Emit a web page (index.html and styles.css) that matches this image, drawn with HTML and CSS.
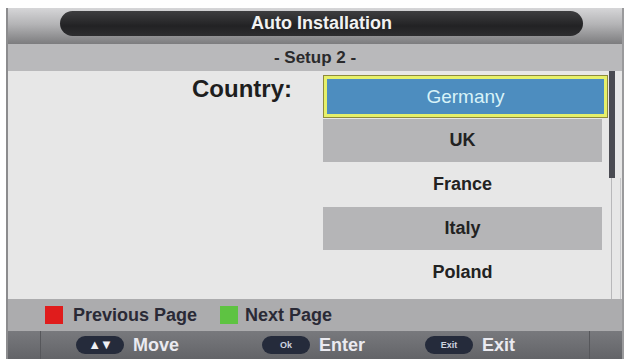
FILE: index.html
```html
<!DOCTYPE html>
<html lang="en">
<head>
    <meta charset="UTF-8">
    <title>Auto Installation</title>
    <link rel="stylesheet" href="styles.css">
</head>
<body>
    <div class="screen">
        <!-- Title -->
        <div class="titlebar">
            <div class="title-pill">Auto Installation</div>
        </div>
        <div class="subbar">- Setup 2 -</div>

        <!-- Country list -->
        <div class="content">
            <div class="label-col">
                <div class="label">Country:</div>
            </div>
            <div class="list">
                <div class="item selected">Germany</div>
                <div class="item shaded">UK</div>
                <div class="item">France</div>
                <div class="item shaded">Italy</div>
                <div class="item">Poland</div>
            </div>
            <div class="scrollbar">
                <div class="thumb"></div>
                <div class="track"></div>
            </div>
        </div>

        <!-- Colour keys -->
        <div class="legend">
            <span class="key red"></span>
            <span class="legend-text">Previous Page</span>
            <span class="key green"></span>
            <span class="legend-text">Next Page</span>
        </div>

        <!-- Remote buttons -->
        <div class="navbar">
            <div class="nav-inner">
                <div class="nav-item move">
                    <span class="btn">&#9650;&#9660;</span>
                    <span class="nav-label">Move</span>
                </div>
                <div class="nav-item enter">
                    <span class="btn small">Ok</span>
                    <span class="nav-label">Enter</span>
                </div>
                <div class="nav-item exit">
                    <span class="btn small">Exit</span>
                    <span class="nav-label">Exit</span>
                </div>
            </div>
        </div>
    </div>
</body>
</html>
```

FILE: styles.css
```css
body {
    margin: 0;
    background: #fff;
    font-family: "Liberation Sans", Arial, sans-serif;
}

.screen {
    width: 614px;
    margin: 8px 0 0 6px;
    border-left: 2px solid #8c8c8e;
    border-right: 2px solid #9a9a9c;
}

.titlebar {
    height: 36px;
    box-sizing: border-box;
    padding: 3px 39px 0 52px;
    background: linear-gradient(to bottom, #d6d6d8 0%, #b4b4b6 45%, #7c7c7e 100%);
}

.title-pill {
    height: 25px;
    line-height: 25px;
    border-radius: 13px;
    background: linear-gradient(to bottom, #3e3e40 0%, #222224 60%, #2e2e30 100%);
    color: #f2f2f2;
    font-weight: bold;
    font-size: 18px;
    text-align: center;
}

.subbar {
    height: 27px;
    line-height: 27px;
    background: #b9b9bb;
    color: #2a2a2c;
    font-weight: bold;
    font-size: 17px;
    text-align: center;
}

.content {
    display: flex;
    height: 228px;
    background: #e7e7e7;
}

.label-col {
    width: 315px;
}

.label {
    margin-top: 4px;
    padding-right: 31px;
    line-height: 28px;
    text-align: right;
    font-size: 24px;
    font-weight: bold;
    color: #1e1e1e;
}

.list {
    width: 285px;
    padding-top: 4px;
}

.item {
    width: 279px;
    height: 43px;
    margin-bottom: 1px;
    line-height: 43px;
    text-align: center;
    font-size: 18px;
    font-weight: bold;
    color: #222;
}

.item.shaded {
    background: #b5b5b7;
}

.item.selected {
    width: 285px;
    box-sizing: border-box;
    line-height: 41px;
    background: #4d8dbf;
    border: 1px solid #8e8a3c;
    box-shadow: inset 0 0 0 3px #e6f06a;
    color: #d8f3f8;
    font-weight: normal;
    font-size: 19px;
}

.scrollbar {
    width: 14px;
    display: flex;
    flex-direction: column;
}

.thumb {
    width: 6px;
    height: 107px;
    margin-left: 1px;
    background: #4a4b52;
}

.track {
    flex: 1;
    margin-left: 3px;
    border-left: 1px solid #b8b8ba;
    border-right: 1px solid #c8c8ca;
    width: 8px;
}

.legend {
    display: flex;
    align-items: center;
    height: 32px;
    padding-left: 37px;
    background: #acacae;
}

.key {
    width: 18px;
    height: 18px;
    margin-right: 10px;
}

.key.red {
    background: #e01c1c;
}

.key.green {
    margin-left: 23px;
    margin-right: 7px;
    background: #5ec342;
}

.legend-text {
    font-size: 18px;
    font-weight: bold;
    color: #2a2a36;
}

.navbar {
    height: 28px;
    background: linear-gradient(to bottom, #78797d 0%, #636468 100%);
}

.nav-inner {
    display: flex;
    align-items: center;
    height: 28px;
    margin: 0 32px;
    border-left: 1px solid #56575b;
    border-right: 1px solid #56575b;
}

.nav-item {
    display: flex;
    align-items: center;
}

.nav-item.move {
    margin-left: 35px;
}

.nav-item.enter {
    margin-left: 83px;
}

.nav-item.exit {
    margin-left: 60px;
}

.btn {
    width: 48px;
    height: 18px;
    line-height: 18px;
    border-radius: 9px;
    background: #252b3b;
    color: #f0f0f4;
    text-align: center;
    font-size: 13px;
    font-weight: bold;
    letter-spacing: -1px;
}

.btn.small {
    font-size: 9px;
    letter-spacing: 0;
    color: #d0d4e0;
}

.nav-label {
    margin-left: 9px;
    font-size: 18px;
    font-weight: bold;
    color: #eaeaf0;
}
```
